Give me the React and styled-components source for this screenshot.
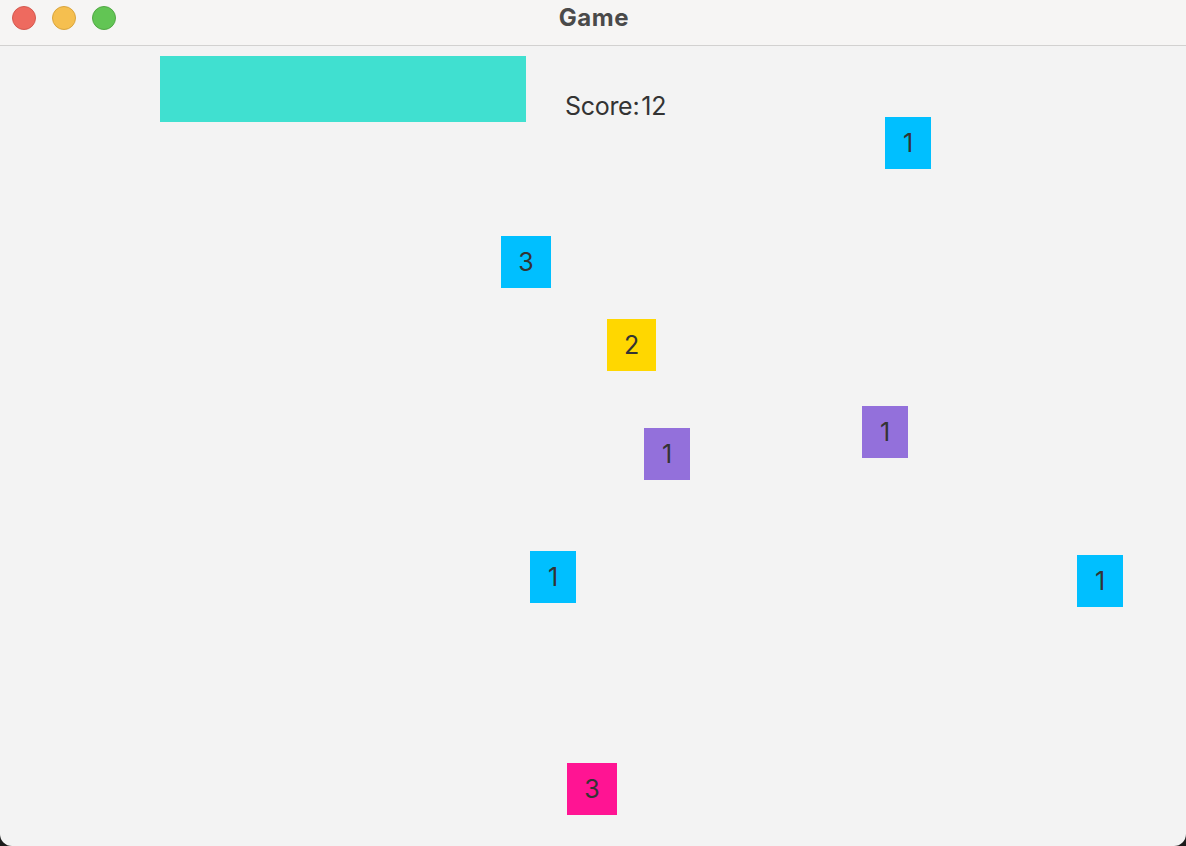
import React from 'react';
import styled, { createGlobalStyle } from 'styled-components';

const GlobalStyle = createGlobalStyle`
    html, body {
        margin: 0;
        padding: 0;
        background: #1c1c1c;
    }
    body {
        font-family: Inter, "Noto Sans", "Liberation Sans", sans-serif;
    }
`;

const blocks = [
    { id: 1, label: '1', color: '#00bfff', x: 885, y: 71, w: 46 },
    { id: 2, label: '3', color: '#00bfff', x: 501, y: 190, w: 50 },
    { id: 3, label: '2', color: '#ffd700', x: 607, y: 273, w: 49 },
    { id: 4, label: '1', color: '#9370db', x: 644, y: 382, w: 46 },
    { id: 5, label: '1', color: '#9370db', x: 862, y: 360, w: 46 },
    { id: 6, label: '1', color: '#00bfff', x: 530, y: 505, w: 46 },
    { id: 7, label: '1', color: '#00bfff', x: 1077, y: 509, w: 46 },
    { id: 8, label: '3', color: '#ff1493', x: 567, y: 717, w: 50 },
];

const App = () => {
    return (
        <>
            <GlobalStyle />
            <Window>
                <TitleBar>
                    <Lights>
                        <Light $fill="#ee6a5f" $edge="#d45a50" />
                        <Light $fill="#f5bf4f" $edge="#d9a53e" />
                        <Light $fill="#62c554" $edge="#52a845" />
                    </Lights>
                    <Title>Game</Title>
                </TitleBar>
                <Canvas>
                    <Paddle />
                    <Score>Score:<Num>12</Num></Score>
                    {blocks.map(b => (
                        <Block
                            key={b.id}
                            $color={b.color}
                            style={{ left: b.x, top: b.y, width: b.w }}
                        >
                            {b.label}
                        </Block>
                    ))}
                </Canvas>
            </Window>
        </>
    );
}

export default App;

const Window = styled.div`
    width: 1186px;
    height: 846px;
    display: flex;
    flex-direction: column;
    background: #f3f3f3;
    border-radius: 0 0 12px 12px;
    overflow: hidden;
`

const TitleBar = styled.div`
    height: 45px;
    flex-shrink: 0;
    position: relative;
    display: flex;
    align-items: center;
    justify-content: center;
    background: #f6f5f4;
    border-bottom: 1px solid #d2d1d0;
`

const Lights = styled.div`
    position: absolute;
    left: 12px;
    top: 6px;
    display: flex;
    gap: 16px;
`

const Light = styled.span`
    width: 24px;
    height: 24px;
    border-radius: 50%;
    box-sizing: border-box;
    background: ${p => p.$fill};
    border: 1px solid ${p => p.$edge};
`

const Title = styled.h1`
    margin: 0 0 10px 2px;
    font-size: 24px;
    font-weight: 700;
    color: #4a4a4a;
    letter-spacing: 0.6px;
`

const Canvas = styled.div`
    flex: 1;
    position: relative;
`

const Paddle = styled.div`
    position: absolute;
    left: 160px;
    top: 10px;
    width: 366px;
    height: 66px;
    background: #40e0d0;
`

const Score = styled.div`
    position: absolute;
    left: 565px;
    top: 48px;
    font-size: 25px;
    line-height: 25px;
    color: #333;
    letter-spacing: -0.3px;
`

const Num = styled.span`
    margin-left: 2px;
`

const Block = styled.div`
    position: absolute;
    height: 52px;
    display: flex;
    align-items: center;
    justify-content: center;
    background: ${p => p.$color};
    color: #333;
    font-size: 25px;
`
